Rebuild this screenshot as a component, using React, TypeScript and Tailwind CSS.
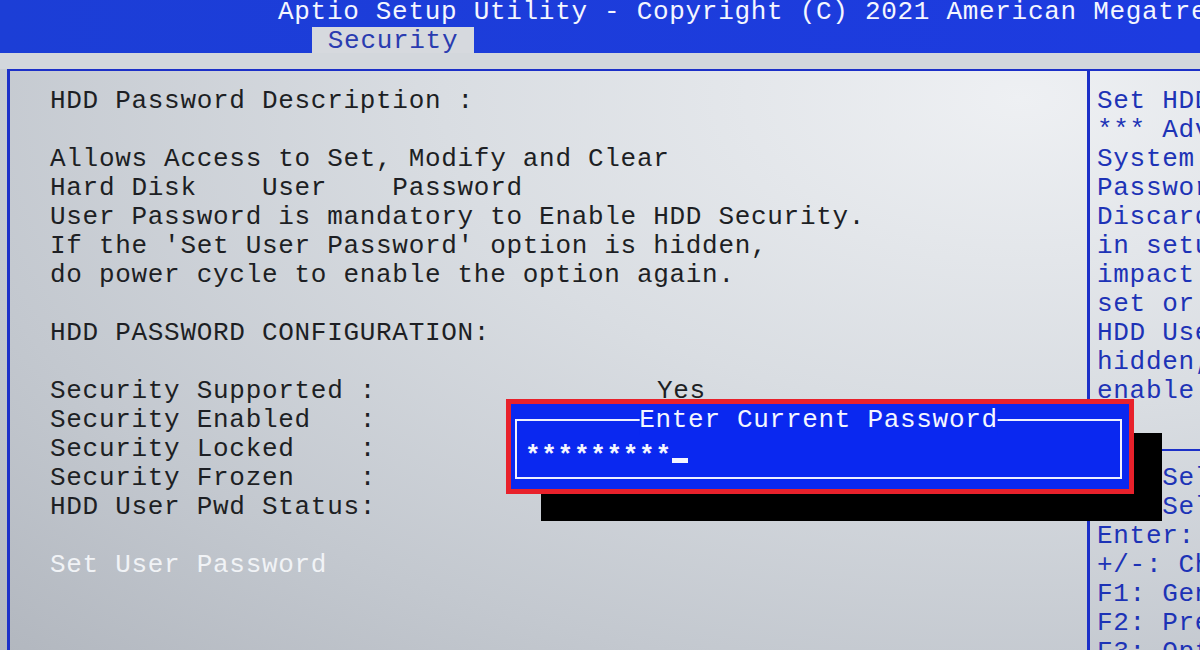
import React from "react";

const mono = "font-['Liberation_Mono','DejaVu_Sans_Mono',monospace] text-[26px] tracking-[0.7px] leading-[29px] whitespace-pre";

const leftLines: { text: string; tone?: "dim" | "hi" }[] = [
  { text: "HDD Password Description :" },
  { text: "" },
  { text: "Allows Access to Set, Modify and Clear" },
  { text: "Hard Disk    User    Password" },
  { text: "User Password is mandatory to Enable HDD Security." },
  { text: "If the 'Set User Password' option is hidden," },
  { text: "do power cycle to enable the option again." },
  { text: "" },
  { text: "HDD PASSWORD CONFIGURATION:" },
  { text: "" },
];

const statusRows: [string, string][] = [
  ["Security Supported :", "Yes"],
  ["Security Enabled   :", ""],
  ["Security Locked    :", ""],
  ["Security Frozen    :", ""],
  ["HDD User Pwd Status:", ""],
];

const helpLines = [
  "Set HDD User Password.",
  "*** Advisable to Power Cycle",
  "System after Setting Hard Disk",
  "Passwords ***",
  "Discard or Save Changes option",
  "in setup does not have any",
  "impact on HDD when password is",
  "set or removed.",
  "HDD User Password option is",
  "hidden, do power cycle to",
  "enable the option again.",
];

const keyLines = [
  "→←: Select Screen",
  "↑↓: Select Item",
  "Enter: Select",
  "+/-: Change Opt.",
  "F1: General Help",
  "F2: Previous Values",
  "F3: Optimized Defaults",
];

const PasswordDialog: React.FC = () => (
  <>
    {/* drop shadow of the popup */}
    <div className="absolute left-[541px] top-[433px] w-[621px] h-[88px] bg-black" />
    <div className="absolute left-[506px] top-[399px] w-[628px] h-[95px] border-[5px] border-[#e8212b] bg-[#0a28f0] pl-[4px] pt-[15px] pr-[7px] pb-[10px]">
      <div className="relative h-full border-2 border-[#eef0ff] pl-[8px] pt-[18px]">
        <div
          className={`${mono} absolute left-1/2 -translate-x-1/2 top-[-15px] bg-[#0a28f0] text-[#f4f6ff]`}
        >
          Enter Current Password
        </div>
        <div className={`${mono} flex items-center text-[#f4f6ff]`}>
          <span className="font-bold translate-y-[3px]">*********</span>
          <span className="inline-block w-[16px] h-[5px] mt-[14px] bg-[#f4f6ff]" />
        </div>
      </div>
    </div>
  </>
);

const App: React.FC = () => {
  return (
    <div className="relative w-[1200px] h-[650px] overflow-hidden flex flex-col bg-[radial-gradient(ellipse_at_85%_15%,#eef0f3_0%,#d9dde2_40%,#c3c8cf_75%,#b2b7bf_100%)]">
      {/* title bar */}
      <div className="h-[53px] shrink-0 bg-[linear-gradient(to_right,#1c3ed6,#1d3be0)] flex flex-col">
        <div className="h-[27px] overflow-visible pl-[278px]">
          <div className={`${mono} -mt-[2px] text-[#f4f6ff]`}>
            Aptio Setup Utility - Copyright (C) 2021 American Megatrends International, LLC.
          </div>
        </div>
        <div className="ml-[312px] w-[162px] h-[26px] bg-[#d6d9de] text-center">
          <div className={`${mono} text-[#2a3cb0]`}>Security</div>
        </div>
      </div>

      <div className="h-[16px] shrink-0 bg-[#d3d7dc]" />

      {/* main frame */}
      <div className="flex-1 pl-[7px] flex">
        <div className="flex-1 flex border-t-2 border-l-[3px] border-[#1c30c8]">
          {/* left panel */}
          <div className="w-[1077px] shrink-0 pl-[40px] pt-[16px] text-[#1d1f24]">
            {leftLines.map((l, i) => (
              <div key={i} className={`${mono} h-[29px]`}>
                {l.text}
              </div>
            ))}
            {statusRows.map(([label, value]) => (
              <div key={label} className={`${mono} h-[29px] flex`}>
                <span className="w-[607px]">{label}</span>
                <span>{value}</span>
              </div>
            ))}
            <div className={`${mono} h-[29px]`} />
            <div className={`${mono} h-[29px] text-[#f1f3f6]`}>Set User Password</div>
          </div>

          {/* help panel */}
          <div className="flex-1 border-l-[3px] border-[#1c30c8] pt-[16px] text-[#1d33b6] overflow-hidden">
            <div className="pl-[7px]">
              {helpLines.map((t, i) => (
                <div key={i} className={`${mono} h-[29px]`}>
                  {t}
                </div>
              ))}
              <div className="h-[29px]" />
            </div>
            <div className="h-[29px] flex items-center">
              <div className="w-full h-[2px] bg-[#1c30c8]" />
            </div>
            <div className="pl-[7px]">
              {keyLines.map((t) => (
                <div key={t} className={`${mono} h-[29px]`}>
                  {t}
                </div>
              ))}
            </div>
          </div>
        </div>
      </div>

      <PasswordDialog />
    </div>
  );
};

export default App;
